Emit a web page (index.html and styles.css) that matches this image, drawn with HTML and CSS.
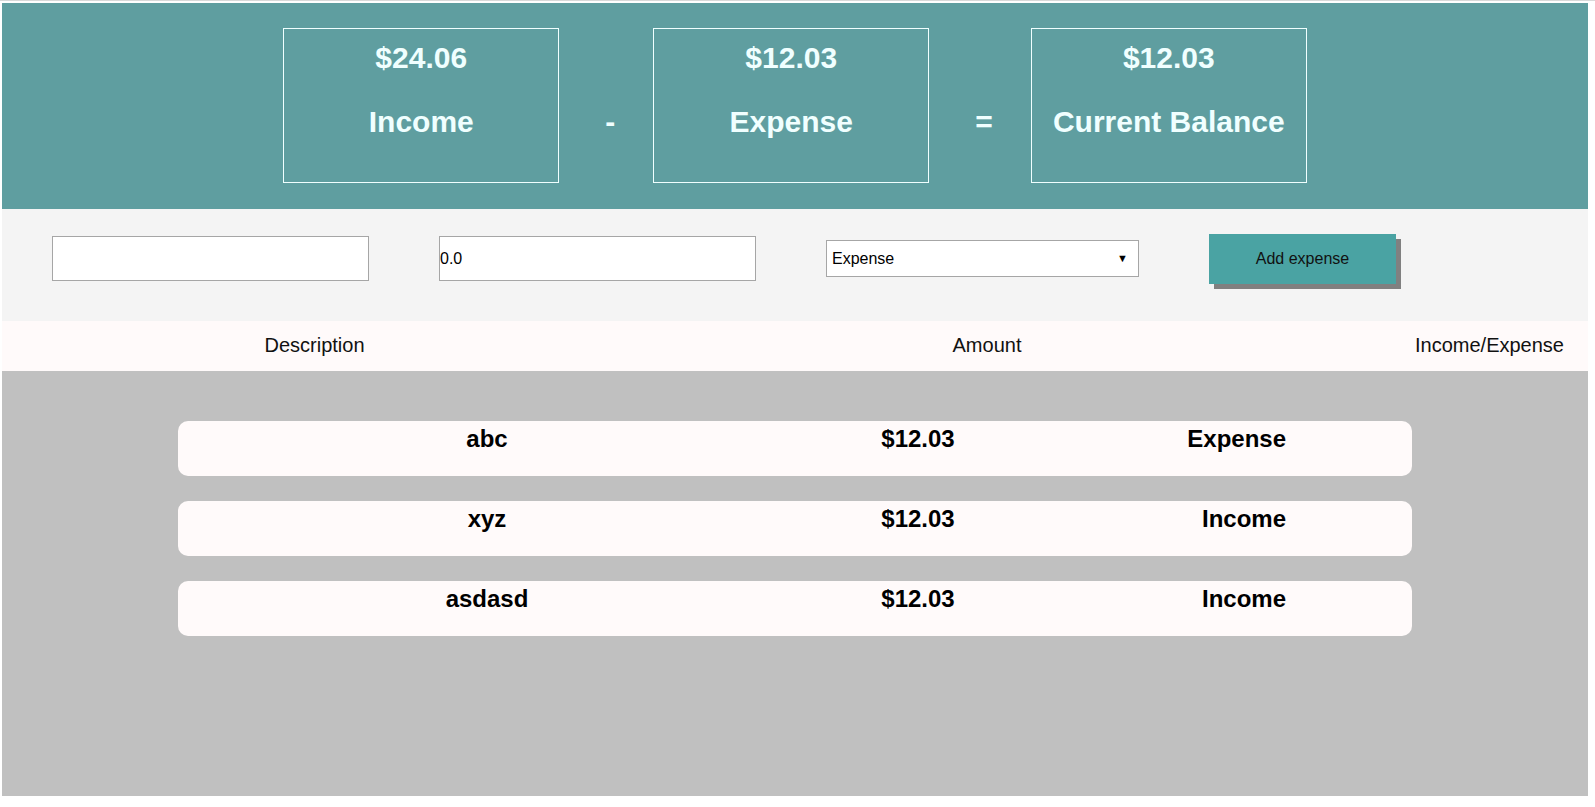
FILE: index.html
```html
<!DOCTYPE html>
<html lang="en">
<head>
<meta charset="utf-8">
<title>Expense Tracker</title>
<link rel="stylesheet" href="styles.css">
</head>
<body>
  <div class="app">
    <header class="summary">
      <div class="card">
        <h1 class="card-value">$24.06</h1>
        <h1 class="card-label">Income</h1>
      </div>
      <h1 class="sign">-</h1>
      <div class="card">
        <h1 class="card-value">$12.03</h1>
        <h1 class="card-label">Expense</h1>
      </div>
      <h1 class="sign">=</h1>
      <div class="card">
        <h1 class="card-value">$12.03</h1>
        <h1 class="card-label">Current Balance</h1>
      </div>
    </header>

    <form class="entry-form">
      <input class="field" type="text" value="">
      <input class="field" type="text" value="0.0">
      <div class="select-wrap">
        <select class="kind">
          <option>Expense</option>
          <option>Income</option>
        </select>
      </div>
      <button class="add-btn" type="button">Add expense</button>
    </form>

    <div class="table-head">
      <div class="th th-desc">Description</div>
      <div class="th th-amount">Amount</div>
      <div class="th th-kind">Income/Expense</div>
    </div>

    <section class="list">
      <div class="row">
        <div class="cell cell-desc">abc</div>
        <div class="cell cell-amount">$12.03</div>
        <div class="cell cell-kind">Expense</div>
      </div>
      <div class="row">
        <div class="cell cell-desc">xyz</div>
        <div class="cell cell-amount">$12.03</div>
        <div class="cell cell-kind">Income</div>
      </div>
      <div class="row">
        <div class="cell cell-desc">asdasd</div>
        <div class="cell cell-amount">$12.03</div>
        <div class="cell cell-kind">Income</div>
      </div>
    </section>
  </div>
</body>
</html>
```

FILE: styles.css
```css
* {
  box-sizing: border-box;
}

html {
  background: #ffffff;
}

body {
  margin: 0;
  padding: 2px 7px 11px 2px;
  border-top: 1px solid #d9d9d9;
  font-family: "Liberation Sans", Arial, sans-serif;
  color: #000;
}

.app {
  display: flex;
  flex-direction: column;
}

/* ---------- summary header ---------- */
.summary {
  background: #5f9ea0;
  height: 206px;
  padding-top: 25px;
  display: flex;
  justify-content: center;
  align-items: flex-start;
}

.card {
  width: 276px;
  height: 155px;
  border: 1px solid #f0ffff;
  padding-top: 12px;
  text-align: center;
  color: #f0ffff;
}

.card-value,
.card-label,
.sign {
  margin: 0;
  font-size: 30px;
  line-height: 34px;
  font-weight: bold;
  color: #f0ffff;
}

.card-label {
  margin-top: 30px;
}

.sign {
  margin: 77px 38px 0 46px;
}

/* ---------- entry form ---------- */
.entry-form {
  background: #f4f4f4;
  height: 112px;
  padding: 25px 0 0 50px;
  display: flex;
  align-items: flex-start;
  gap: 70px;
}

.field {
  width: 317px;
  height: 45px;
  margin-top: 2px;
  border: 1px solid #a6a6a6;
  background: #fff;
  padding: 0;
  font-family: "Liberation Sans", Arial, sans-serif;
  font-size: 16px;
  color: #000;
  outline: none;
}

.select-wrap {
  position: relative;
  width: 313px;
  height: 37px;
  margin-top: 6px;
}

.select-wrap::after {
  content: "\25BC";
  position: absolute;
  right: 11px;
  top: 12px;
  font-size: 11px;
  line-height: 12px;
  color: #000;
  pointer-events: none;
}

.kind {
  appearance: none;
  -webkit-appearance: none;
  width: 100%;
  height: 100%;
  border: 1px solid #a6a6a6;
  border-radius: 0;
  background: #fff;
  padding: 0 0 0 5px;
  font-family: "Liberation Sans", Arial, sans-serif;
  font-size: 16px;
  color: #000;
}

.add-btn {
  width: 187px;
  height: 50px;
  border: none;
  background: #4aa3a3;
  box-shadow: 5px 5px 0 #808080;
  font-family: "Liberation Sans", Arial, sans-serif;
  font-size: 16px;
  color: #111;
  padding: 0;
}

/* ---------- table header ---------- */
.table-head {
  background: #fffafa;
  height: 50px;
  padding-bottom: 2px;
  display: grid;
  grid-template-columns: 625px 720px 1fr;
  align-items: center;
  font-size: 20px;
  color: #111;
}

.th-desc,
.th-amount {
  text-align: center;
}

.th-kind {
  padding-left: 68px;
  white-space: nowrap;
}

/* ---------- list ---------- */
.list {
  background: #c0c0c0;
  height: 425px;
  padding-top: 50px;
  display: flex;
  flex-direction: column;
  align-items: center;
  gap: 25px;
}

.row {
  width: 1234px;
  height: 55px;
  background: #fffafa;
  border-radius: 10px;
  padding-top: 4px;
  display: grid;
  grid-template-columns: 618px 244px 246px 1fr;
  align-items: start;
  font-size: 24px;
  font-weight: bold;
  line-height: 28px;
}

.cell-desc,
.cell-amount {
  text-align: center;
}

.cell-kind {
  text-align: right;
}
```
